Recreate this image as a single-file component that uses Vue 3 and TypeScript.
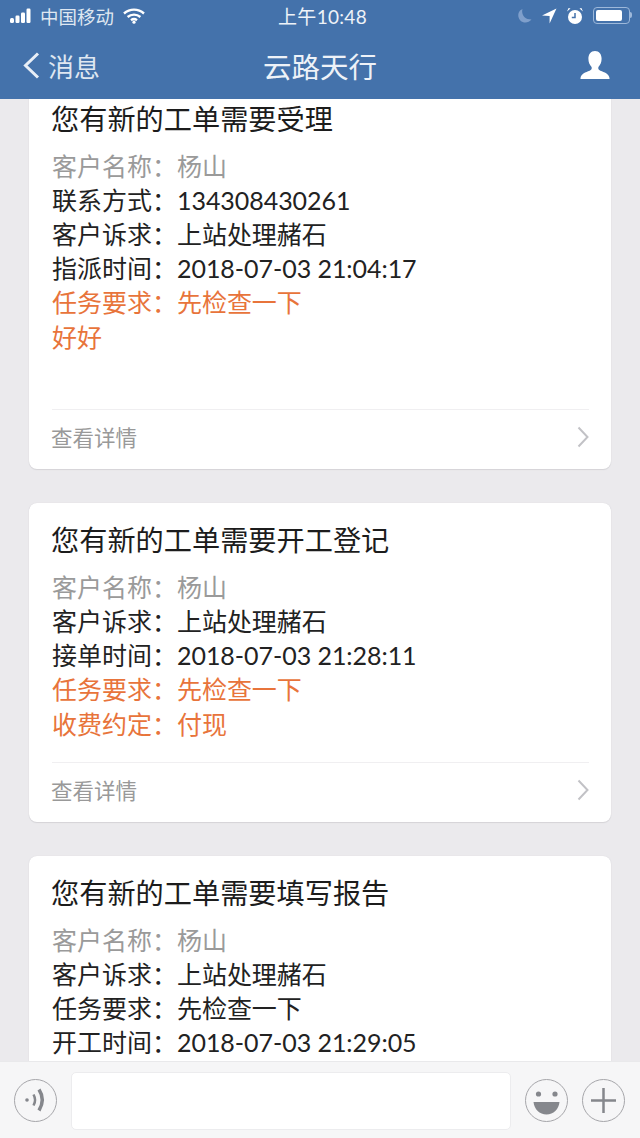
<template>
  <div class="phone">
    <header class="top">
      <div class="status">
        <div class="status-left">
          <svg class="signal" width="24" height="16" viewBox="0 0 24 16">
            <rect x="0" y="10" width="4" height="5" rx="1.5" />
            <rect x="5.5" y="7.5" width="4" height="7.5" rx="1.2" />
            <rect x="11" y="4.5" width="4" height="10.5" rx="1.2" />
            <rect x="16.5" y="0.5" width="4" height="14.5" rx="1.2" />
          </svg>
          <span class="carrier">中国移动</span>
          <svg class="wifi" width="22" height="16" viewBox="0 0 22 16">
            <path d="M1 5.5C6.8.3 15.2.3 21 5.5" />
            <path d="M4.6 9C8.3 5.8 13.7 5.8 17.4 9" />
            <path d="M8 12.2c1.8-1.4 4.2-1.4 6 0" />
            <circle cx="11" cy="14.2" r="1.6" class="wifi-dot" />
          </svg>
        </div>
        <span class="clock">上午10:48</span>
        <div class="status-right">
          <svg width="14" height="16" viewBox="0 0 14 16">
            <path class="moon" d="M4.5 1C3 6.5 6.5 11.5 13.5 11.5 11.5 14 8.5 15 6 14.4 1.5 13.3-.6 8.7.6 5 1.2 3.2 2.6 1.7 4.5 1z" />
          </svg>
          <svg width="16" height="16" viewBox="0 0 16 16">
            <path class="solid" d="M15.5.5 8.6 15.5V8L1 7.6z" />
          </svg>
          <svg width="18" height="18" viewBox="0 0 18 18">
            <circle class="solid" cx="9" cy="10" r="7" />
            <path class="solid" d="M1 4.5 4.5 1.5 2.6 1zM17 4.5 13.5 1.5 15.4 1z" />
            <path class="clock-hand" d="M9 6v4.4H5.8" />
          </svg>
          <div class="battery">
            <span class="battery-fill"></span>
          </div>
        </div>
      </div>
      <nav class="navbar">
        <div class="back">
          <svg width="17" height="27" viewBox="0 0 17 27">
            <path d="M15 1.5 2.5 13.5 15 25.5" />
          </svg>
          <span>消息</span>
        </div>
        <h1>云路天行</h1>
        <svg class="avatar" width="30" height="28" viewBox="0 0 30 28">
          <path d="M15 0c4.200 0 6.600 3.200 6.600 7.800 0 3.200-1.300 6.400-3.200 8.200-.5 1.900.2 3 2 3.700 4 1.500 8.400 3 9.100 7.300V28H.5v-1c.7-4.300 5.100-5.800 9.100-7.300 1.800-.7 2.500-1.800 2-3.700-1.900-1.800-3.200-5-3.200-8.200C8.400 3.200 10.800 0 15 0z" />
        </svg>
      </nav>
    </header>

    <main class="feed">
      <article v-for="card in cards" :key="card.title" class="card">
        <h2>{{ card.title }}</h2>
        <div class="rows">
          <p v-for="row in card.rows" :key="row.label" class="row" :class="row.tone">
            {{ row.label }}：<span class="value">{{ row.value }}</span>
          </p>
          <p v-if="card.note" class="row orange">{{ card.note }}</p>
          <p v-if="card.note" class="row">&nbsp;</p>
        </div>
        <div class="more">
          <span>查看详情</span>
          <svg width="12" height="22" viewBox="0 0 12 22">
            <path d="M1.500 1.500 10.500 11 1.500 20.500" />
          </svg>
        </div>
      </article>
    </main>

    <footer class="inputbar">
      <button class="round" aria-label="语音">
        <svg width="43" height="43" viewBox="0 0 43 43">
          <circle class="glyph-fill" cx="13" cy="21" r="1.800" />
          <path class="glyph-line" d="M19.500 15.500c2 3.500 2 7.500 0 11" />
          <path class="glyph-line thick" d="M25 10.500c4.200 6.500 4.200 14 0 21" />
        </svg>
      </button>
      <div class="field"></div>
      <button class="round" aria-label="表情">
        <svg width="43" height="43" viewBox="0 0 43 43">
          <circle class="glyph-fill" cx="13.500" cy="15" r="2.600" />
          <circle class="glyph-fill" cx="30" cy="15" r="2.600" />
          <path class="glyph-fill" d="M8.500 23h26c-.8 7.500-6 12.500-13 12.500S9.300 30.500 8.500 23z" />
        </svg>
      </button>
      <button class="round" aria-label="更多">
        <svg width="43" height="43" viewBox="0 0 43 43">
          <path class="glyph-line" d="M21.500 9v25M9 21.500h25" />
        </svg>
      </button>
    </footer>
  </div>
</template>

<script setup lang="ts">
  interface Row {
    label: string
    value: string
    tone?: string
  }

  interface Card {
    title: string
    rows: Row[]
    note?: string
  }

  const name: Row = { label: "客户名称", value: "杨山", tone: "gray" }
  const appeal: Row = { label: "客户诉求", value: "上站处理赭石" }

  const cards: Card[] = [
    {
      title: "您有新的工单需要受理",
      rows: [
        name,
        { label: "联系方式", value: "134308430261" },
        appeal,
        { label: "指派时间", value: "2018-07-03 21:04:17" },
        { label: "任务要求", value: "先检查一下", tone: "orange" },
      ],
      note: "好好",
    },
    {
      title: "您有新的工单需要开工登记",
      rows: [
        name,
        appeal,
        { label: "接单时间", value: "2018-07-03 21:28:11" },
        { label: "任务要求", value: "先检查一下", tone: "orange" },
        { label: "收费约定", value: "付现", tone: "orange" },
      ],
    },
    {
      title: "您有新的工单需要填写报告",
      rows: [
        name,
        appeal,
        { label: "任务要求", value: "先检查一下" },
        { label: "开工时间", value: "2018-07-03 21:29:05" },
      ],
    },
  ]
</script>

<style>
  body {
    background: #ebeaed;
  }
</style>

<style scoped>
  .phone {
    width: 640px;
    height: 1138px;
    display: flex;
    flex-direction: column;
    overflow: hidden;
    background: #ebeaed;
    font-family: Lato, "Noto Sans CJK SC", "Liberation Sans", sans-serif;
  }

  .top {
    position: relative;
    z-index: 2;
    height: 99px;
    flex-shrink: 0;
    background: #4472ab;
    color: #fff;
  }

  .status {
    height: 31px;
    padding: 0 10px;
    display: grid;
    grid-template-columns: 1fr auto 1fr;
    align-items: center;
  }
  .status-left,
  .status-right {
    display: flex;
    align-items: center;
  }
  .status-right {
    justify-content: flex-end;
    gap: 9px;
  }
  .signal {
    fill: #fff;
  }
  .carrier {
    margin-left: 6px;
    font-size: 18.500px;
    color: #dfe7f1;
  }
  .wifi {
    margin-left: 9px;
    fill: none;
    stroke: #fff;
    stroke-width: 2.4;
  }
  .wifi-dot {
    fill: #fff;
    stroke: none;
  }
  .clock {
    margin-left: 5px;
    font-size: 19px;
    letter-spacing: 0.300px;
    color: #eef2f8;
  }
  .moon {
    fill: #7f9fcb;
  }
  .solid {
    fill: #fff;
  }
  .clock-hand {
    fill: none;
    stroke: #4472ab;
    stroke-width: 1.500;
  }
  .battery {
    position: relative;
    width: 37px;
    height: 17px;
    padding: 2px;
    box-sizing: border-box;
    border: 1px solid #9db8da;
    border-radius: 4px;
  }
  .battery::after {
    content: "";
    position: absolute;
    right: -3px;
    top: 4px;
    width: 2px;
    height: 6px;
    border-radius: 0 2px 2px 0;
    background: #9db8da;
  }
  .battery-fill {
    display: block;
    width: 26px;
    height: 100%;
    border-radius: 2px;
    background: #fff;
  }

  .navbar {
    height: 68px;
    padding: 0 30px 0 23px;
    display: flex;
    align-items: center;
    justify-content: space-between;
    position: relative;
  }
  .back {
    display: flex;
    align-items: center;
    gap: 8px;
    font-size: 26px;
    color: #dfe7f1;
  }
  .back svg {
    fill: none;
    stroke: #e8eef6;
    stroke-width: 3;
  }
  .navbar h1 {
    position: absolute;
    left: 0;
    right: 0;
    margin: 0;
    text-align: center;
    font-size: 28.500px;
    font-weight: 400;
    color: #eef2f8;
    pointer-events: none;
  }
  .avatar {
    fill: #fff;
  }

  .feed {
    flex: 1;
    min-height: 0;
    overflow: hidden;
    padding: 0 29px;
    display: flex;
    flex-direction: column;
    gap: 34px;
  }
  .card {
    flex-shrink: 0;
    padding: 17px 22px 0 23px;
    background: #fff;
    border-radius: 8px;
    box-shadow: 0 0 1px #cfced3, 0 1px 1px #d5d4d8;
  }
  .card:first-child {
    margin-top: -17.400px;
  }
  .card h2 {
    margin: 0 0 0 -1px;
    height: 40px;
    line-height: 40px;
    font-size: 28.200px;
    font-weight: 400;
    color: #1c1c1c;
  }
  .rows {
    margin-top: 10px;
  }
  .row {
    margin: 0;
    height: 34.200px;
    line-height: 34.200px;
    font-size: 25px;
    color: #222;
    white-space: nowrap;
  }
  .value {
    letter-spacing: -0.050px;
  }
  .row.gray {
    color: #9a9a9a;
  }
  .row.orange {
    color: #e8743b;
  }

  .more {
    margin-top: 21px;
    padding-bottom: 5px;
    box-sizing: border-box;
    height: 60px;
    border-top: 1px solid #f0eff1;
    display: flex;
    align-items: center;
    justify-content: space-between;
    font-size: 21.500px;
    color: #999;
  }
  .more span {
    margin-left: -1px;
  }
  .more svg {
    fill: none;
    stroke: #c2c2c6;
    stroke-width: 2;
  }

  .inputbar {
    height: 77px;
    flex-shrink: 0;
    box-sizing: border-box;
    padding: 1px 14px 0;
    display: flex;
    align-items: center;
    background: #f6f6f7;
    border-top: 1px solid #e9e9eb;
  }
  .round {
    width: 43px;
    height: 43px;
    padding: 0;
    flex-shrink: 0;
    box-sizing: border-box;
    border: 1px solid #a6a6aa;
    border-radius: 50%;
    background: transparent;
    display: flex;
    align-items: center;
    justify-content: center;
  }
  .round svg {
    flex-shrink: 0;
  }
  .round + .round {
    margin-left: 14px;
  }
  .field {
    width: 440px;
    height: 58px;
    margin: 0 14px;
    box-sizing: border-box;
    background: #fff;
    border: 1px solid #ececee;
    border-radius: 5px;
  }
  .glyph-fill {
    fill: #85878c;
  }
  .glyph-line {
    fill: none;
    stroke: #85878c;
    stroke-width: 2.500;
  }
  .glyph-line.thick {
    stroke-width: 3.500;
  }
</style>
